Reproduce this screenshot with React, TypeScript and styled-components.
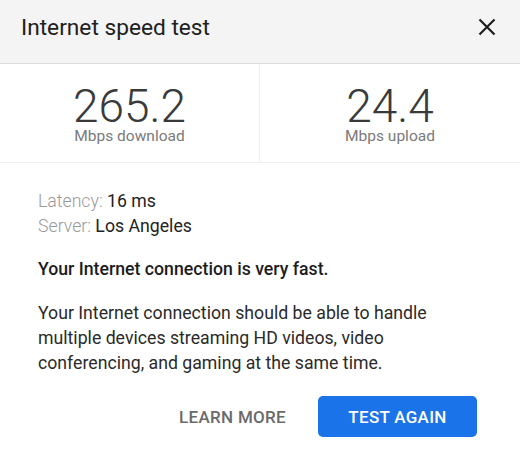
import styled, { createGlobalStyle } from 'styled-components';

const GlobalStyle = createGlobalStyle`
  html, body {
    margin: 0;
    padding: 0;
    background: #ffffff;
  }
  body {
    font-family: Roboto, "Liberation Sans", Arial, sans-serif;
    color: #212121;
  }
`;

const Dialog = styled.div`
  width: 520px;
  height: 460px;
  background: #ffffff;
  display: flex;
  flex-direction: column;
  overflow: hidden;
`;

const Header = styled.header`
  height: 64px;
  box-sizing: border-box;
  background: #f4f4f4;
  border-bottom: 1px solid #dcdcdc;
  display: flex;
  align-items: center;
  justify-content: space-between;
  padding: 0 22px 9px 21px;
`;

const Title = styled.h1`
  margin: 0;
  font-size: 22.7px;
  font-weight: 400;
  color: #202020;
`;

const CloseButton = styled.button`
  border: 0;
  background: transparent;
  padding: 0;
  width: 22px;
  height: 22px;
  display: flex;
  align-items: center;
  justify-content: center;
  cursor: pointer;
`;

const Stats = styled.section`
  display: grid;
  grid-template-columns: 1fr 1fr;
  height: 98px;
  border-bottom: 1px solid #efefef;
`;

const Stat = styled.div<{ $divider?: boolean }>`
  display: flex;
  flex-direction: column;
  align-items: center;
  padding-top: 21px;
  border-right: ${(p) => (p.$divider ? '1px solid #efefef' : 'none')};
`;

const StatValue = styled.div`
  font-size: 46px;
  font-weight: 300;
  line-height: 43px;
  color: #3a3a3a;
`;

const StatLabel = styled.div`
  margin-top: 1px;
  font-size: 15.5px;
  line-height: 14px;
  color: #7a7a7a;
`;

const Body = styled.div`
  padding: 26px 38px 0 38px;
  display: flex;
  flex-direction: column;
`;

const InfoLine = styled.div`
  font-size: 17.7px;
  line-height: 25px;
  color: #222222;
`;

const InfoLabel = styled.span`
  font-weight: 300;
  color: #9a9a9a;
`;

const Verdict = styled.p`
  margin: 18px 0 0 0;
  font-size: 17.7px;
  font-weight: 500;
  line-height: 25px;
  color: #1c1c1c;
`;

const Description = styled.p`
  margin: 19px 0 0 0;
  max-width: 420px;
  font-size: 17.7px;
  line-height: 25px;
  color: #2a2a2a;
`;

const Actions = styled.div`
  display: flex;
  justify-content: flex-end;
  align-items: center;
  gap: 32px;
  padding: 20px 43px 0 0;
`;

const Button = styled.button<{ $primary?: boolean }>`
  font-family: Roboto, "Liberation Sans", Arial, sans-serif;
  font-size: 17px;
  font-weight: 500;
  letter-spacing: 0.3px;
  text-transform: uppercase;
  border: 0;
  border-radius: 5px;
  height: 41px;
  padding: ${(p) => (p.$primary ? '0 30px' : '0')};
  min-width: ${(p) => (p.$primary ? '159px' : '0')};
  background: ${(p) => (p.$primary ? '#1a73e8' : 'transparent')};
  color: ${(p) => (p.$primary ? '#ffffff' : '#6a6a6a')};
  cursor: pointer;
`;

const stats = [
  { value: '265.2', label: 'Mbps download' },
  { value: '24.4', label: 'Mbps upload' },
];

export default function App() {
  return (
    <>
      <GlobalStyle />
      <Dialog>
        <Header>
          <Title>Internet speed test</Title>
          <CloseButton aria-label="Close">
            <svg width="18" height="18" viewBox="0 0 18 18">
              <path d="M1.5 1.5 L16.5 16.5 M16.5 1.5 L1.5 16.5" stroke="#1f1f1f" strokeWidth="2.2" />
            </svg>
          </CloseButton>
        </Header>

        <Stats>
          {stats.map((s, i) => (
            <Stat key={s.label} $divider={i === 0}>
              <StatValue>{s.value}</StatValue>
              <StatLabel>{s.label}</StatLabel>
            </Stat>
          ))}
        </Stats>

        <Body>
          <InfoLine>
            <InfoLabel>Latency:</InfoLabel> 16 ms
          </InfoLine>
          <InfoLine>
            <InfoLabel>Server:</InfoLabel> Los Angeles
          </InfoLine>

          <Verdict>Your Internet connection is very fast.</Verdict>

          <Description>
            Your Internet connection should be able to handle multiple devices streaming HD videos,
            video conferencing, and gaming at the same time.
          </Description>
        </Body>

        <Actions>
          <Button>Learn more</Button>
          <Button $primary>Test again</Button>
        </Actions>
      </Dialog>
    </>
  );
}
